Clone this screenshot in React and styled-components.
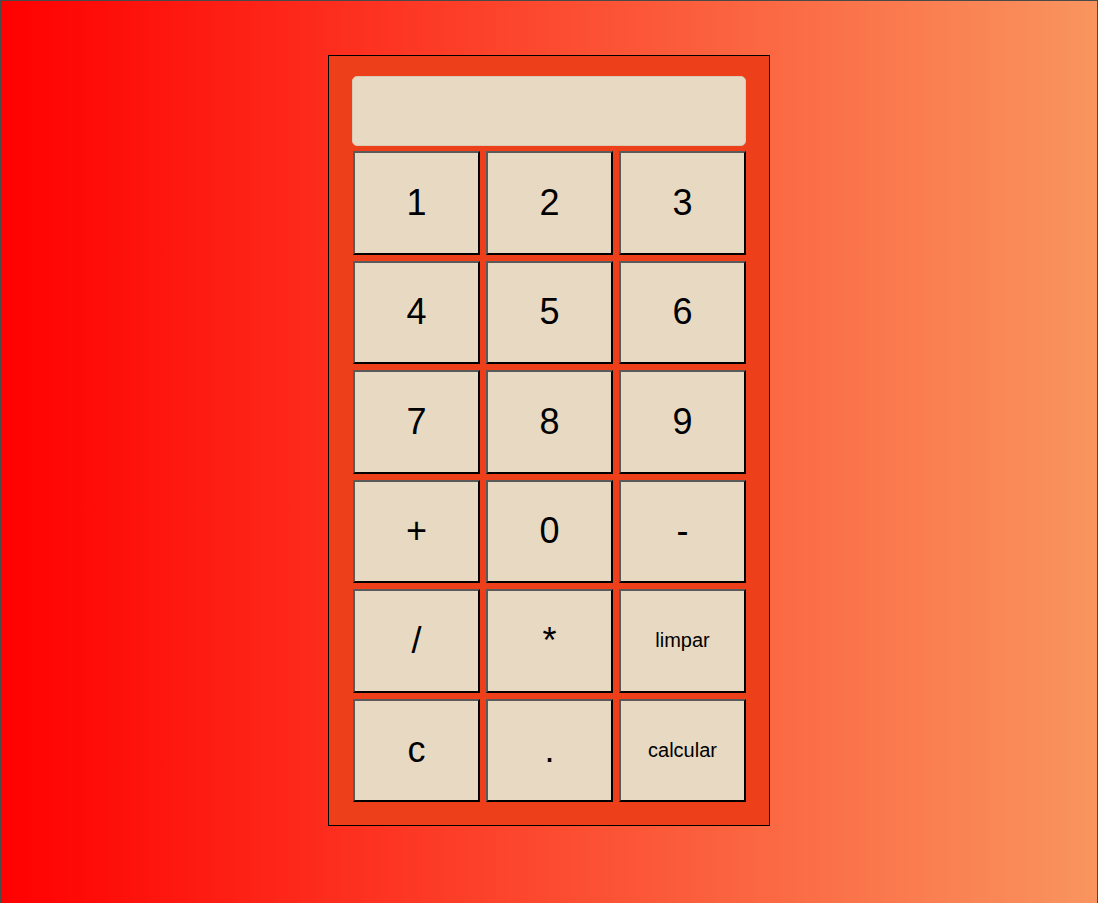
import styled, { createGlobalStyle } from "styled-components";
import { useState } from "react";

const GlobalStyle = createGlobalStyle`
	body {
		margin: 0;
		font-family: "Liberation Sans", Arial, sans-serif;
	}
`;

const Page = styled.div`
	box-sizing: border-box;
	min-height: 920px;
	border: 1px solid #4a4a4a;
	background: linear-gradient(to right, #ff0000, #f9955f);
	display: flex;
	justify-content: center;
	align-items: flex-start;
	padding-top: 54px;
`;

const Calculator = styled.div`
	box-sizing: border-box;
	width: 442px;
	height: 771px;
	background: #ec3f1a;
	border: 1px solid #000;
	padding: 20px 23px 21px 23px;
	display: flex;
	flex-direction: column;
	gap: 5px;
`;

const Display = styled.input`
	box-sizing: border-box;
	width: 394px;
	height: 70px;
	border: 1px solid #d8c8b4;
	border-radius: 5px;
	background: #e8d9c2;
	font-family: "Liberation Sans", Arial, sans-serif;
	font-size: 32px;
	text-align: right;
	padding: 0 12px;
	outline: none;
`;

const Keys = styled.div`
	display: grid;
	grid-template-columns: repeat(3, 127px);
	grid-auto-rows: 103.5px;
	column-gap: 6px;
	row-gap: 6px;
	margin-left: 1px;
`;

const Key = styled.button`
	box-sizing: border-box;
	background: #e8d9c2;
	border-width: 2px;
	border-style: solid;
	border-color: #5a5a5a #000 #000 #5a5a5a;
	font-family: "Liberation Sans", Arial, sans-serif;
	font-size: ${(p) => (p.$small ? "20px" : "36px")};
	color: #000;
	padding: 0;
	cursor: pointer;
`;

const keys = [
	"1", "2", "3",
	"4", "5", "6",
	"7", "8", "9",
	"+", "0", "-",
	"/", "*", "limpar",
	"c", ".", "calcular",
];

export default function App() {
	const [value, setValue] = useState("");

	const press = (k) => {
		if (k === "limpar") {
			setValue("");
		} else if (k === "c") {
			setValue((v) => v.slice(0, -1));
		} else if (k === "calcular") {
			try {
				// eslint-disable-next-line no-new-func
				setValue(String(Function("return (" + value + ")")()));
			} catch (e) {
				setValue("erro");
			}
		} else {
			setValue((v) => v + k);
		}
	};

	return (
		<>
			<GlobalStyle />
			<Page>
				<Calculator>
					<Display value={value} readOnly />
					<Keys>
						{keys.map((k) => (
							<Key key={k} $small={k.length > 1} onClick={() => press(k)}>
								{k}
							</Key>
						))}
					</Keys>
				</Calculator>
			</Page>
		</>
	);
}
